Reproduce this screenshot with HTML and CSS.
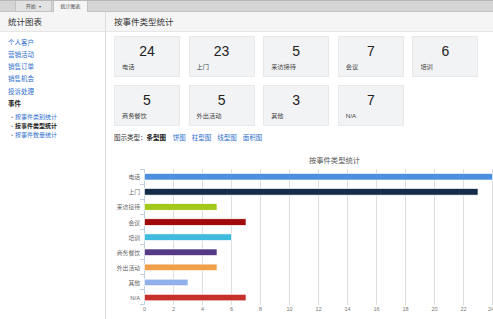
FILE: index.html
```html
<!DOCTYPE html>
<html lang="zh">
<head>
<meta charset="utf-8">
<title>按事件类型统计</title>
<link rel="stylesheet" href="styles.css">
</head>
<body>
<div class="topbar">
  <div class="tab">开始 <span class="caret">▾</span></div>
  <div class="tab active">统计图表</div>
</div>
<div class="layout">
  <aside class="sidebar">
    <div class="panel-head">统计图表</div>
    <ul class="nav">
      <li><a class="link">个人客户</a></li>
      <li><a class="link">营销活动</a></li>
      <li><a class="link">销售订单</a></li>
      <li><a class="link">销售机会</a></li>
      <li><a class="link">投诉处理</a></li>
      <li class="group">事件</li>
    </ul>
    <ul class="subnav">
      <li><span class="dot">•</span><a class="link">按事件类别统计</a></li>
      <li class="current"><span class="dot">•</span>按事件类型统计</li>
      <li><span class="dot">•</span><a class="link">按事件数量统计</a></li>
    </ul>
  </aside>
  <main class="main">
    <div class="panel-head">按事件类型统计</div>
    <div class="content">
      <div class="cards">
        <div class="card"><div class="num">24</div><div class="lbl">电话</div></div>
        <div class="card"><div class="num">23</div><div class="lbl">上门</div></div>
        <div class="card"><div class="num">5</div><div class="lbl">来访接待</div></div>
        <div class="card"><div class="num">7</div><div class="lbl">会议</div></div>
        <div class="card"><div class="num">6</div><div class="lbl">培训</div></div>
        <div class="card"><div class="num">5</div><div class="lbl">商务餐饮</div></div>
        <div class="card"><div class="num">5</div><div class="lbl">外出活动</div></div>
        <div class="card"><div class="num">3</div><div class="lbl">其他</div></div>
        <div class="card"><div class="num">7</div><div class="lbl">N/A</div></div>
      </div>
      <div class="types">
        <span class="type-label">图示类型：<b>条型图</b></span>
        <a class="link">饼图</a>
        <a class="link">柱型图</a>
        <a class="link">线型图</a>
        <a class="link">面积图</a>
      </div>
      <svg class="chart" width="380" height="178" viewBox="0 0 380 178">
        <text class="title" x="220.5" y="21" text-anchor="middle">按事件类型统计</text>
        <g class="grid">
          <line x1="59.5" y1="27" x2="59.5" y2="163"/>
          <line x1="88.5" y1="27" x2="88.5" y2="163"/>
          <line x1="117.5" y1="27" x2="117.5" y2="163"/>
          <line x1="146.5" y1="27" x2="146.5" y2="163"/>
          <line x1="175.5" y1="27" x2="175.5" y2="163"/>
          <line x1="204.5" y1="27" x2="204.5" y2="163"/>
          <line x1="233.5" y1="27" x2="233.5" y2="163"/>
          <line x1="262.5" y1="27" x2="262.5" y2="163"/>
          <line x1="291.5" y1="27" x2="291.5" y2="163"/>
          <line x1="320.5" y1="27" x2="320.5" y2="163"/>
          <line x1="349.5" y1="27" x2="349.5" y2="163"/>
          <line x1="378.5" y1="27" x2="378.5" y2="163"/>
        </g>
        <g class="axis">
          <line x1="30.5" y1="27" x2="30.5" y2="163"/>
          <line x1="26" y1="27.5" x2="30.5" y2="27.5"/>
          <line x1="26" y1="42.5" x2="30.5" y2="42.5"/>
          <line x1="26" y1="57.5" x2="30.5" y2="57.5"/>
          <line x1="26" y1="72.5" x2="30.5" y2="72.5"/>
          <line x1="26" y1="87.5" x2="30.5" y2="87.5"/>
          <line x1="26" y1="102.5" x2="30.5" y2="102.5"/>
          <line x1="26" y1="117.5" x2="30.5" y2="117.5"/>
          <line x1="26" y1="132.5" x2="30.5" y2="132.5"/>
          <line x1="26" y1="147.5" x2="30.5" y2="147.5"/>
          <line x1="26" y1="162.5" x2="30.5" y2="162.5"/>
        </g>
        <g class="bars">
          <rect x="30.5" y="31.5" width="348" height="6.5" fill="#4b8fde"/>
          <rect x="30.5" y="46.6" width="333.5" height="6.5" fill="#162c4b"/>
          <rect x="30.5" y="61.7" width="72.5" height="6.5" fill="#a2c81c"/>
          <rect x="30.5" y="76.8" width="101.5" height="6.5" fill="#a00a0a"/>
          <rect x="30.5" y="91.9" width="87" height="6.5" fill="#40bbe0"/>
          <rect x="30.5" y="107.0" width="72.5" height="6.5" fill="#563a88"/>
          <rect x="30.5" y="122.1" width="72.5" height="6.5" fill="#f0a04a"/>
          <rect x="30.5" y="137.2" width="43.5" height="6.5" fill="#8fb0ea"/>
          <rect x="30.5" y="152.3" width="101.5" height="6.5" fill="#c8302b"/>
        </g>
        <g class="ylabels" text-anchor="end">
          <text x="26" y="37">电话</text>
          <text x="26" y="52">上门</text>
          <text x="26" y="67">来访接待</text>
          <text x="26" y="82.5">会议</text>
          <text x="26" y="97.5">培训</text>
          <text x="26" y="112.5">商务餐饮</text>
          <text x="26" y="127.5">外出活动</text>
          <text x="26" y="142.5">其他</text>
          <text x="26" y="157.5">N/A</text>
        </g>
        <g class="xlabels" text-anchor="middle">
          <text x="30.5" y="168.5">0</text>
          <text x="59.5" y="168.5">2</text>
          <text x="88.5" y="168.5">4</text>
          <text x="117.5" y="168.5">6</text>
          <text x="146.5" y="168.5">8</text>
          <text x="175.5" y="168.5">10</text>
          <text x="204.5" y="168.5">12</text>
          <text x="233.5" y="168.5">14</text>
          <text x="262.5" y="168.5">16</text>
          <text x="291.5" y="168.5">18</text>
          <text x="320.5" y="168.5">20</text>
          <text x="349.5" y="168.5">22</text>
          <text x="377" y="168.5">24</text>
        </g>
      </svg>
    </div>
  </main>
</div>
</body>
</html>
```
FILE: styles.css
```css
* { box-sizing: border-box; }
html, body { margin: 0; padding: 0; }
body {
  width: 493px;
  height: 319px;
  overflow: hidden;
  background: #fff;
  font-family: "Liberation Sans", "Noto Sans CJK SC", sans-serif;
  color: #333;
}
a { text-decoration: none; cursor: pointer; }
.link { color: #2f6fcf; }

.topbar {
  height: 12px;
  background: #d5d5d5;
  border-top: 1px solid #b8b8b8;
  border-bottom: 1px solid #c4c4c4;
  display: flex;
  padding-left: 15px;
  gap: 1px;
}
.tab {
  height: 11px;
  font-size: 5px;
  line-height: 10px;
  color: #555;
  background: #e2e2e2;
  border: 1px solid #c2c2c2;
  border-top: none;
  width: 37px;
  text-align: center;
}
.tab .caret { font-size: 4px; margin-left: 2px; }
.tab.active {
  background: #f5f5f5;
  width: 35px;
  height: 12px;
  border-bottom: none;
  color: #444;
}

.layout {
  display: flex;
  height: 308px;
}
.sidebar {
  width: 106px;
  flex: none;
  border-right: 1px solid #dcdcdc;
}
.panel-head {
  height: 20px;
  background: #f5f5f5;
  border-bottom: 1px solid #e6e6e6;
  font-size: 8.5px;
  line-height: 20px;
  color: #333;
  padding-left: 8px;
}

.nav, .subnav { list-style: none; margin: 0; padding: 0; }
.nav { padding-top: 5px; padding-left: 8px; }
.nav li {
  font-size: 6.5px;
  line-height: 12.15px;
  height: 12.15px;
}
.nav .group { font-weight: bold; color: #222; }
.subnav { padding-left: 11px; padding-top: 3px; }
.subnav li {
  font-size: 6px;
  line-height: 9px;
  height: 9px;
}
.subnav .dot { color: #999; margin-right: 2px; font-size: 6px; }
.subnav .current { color: #222; font-weight: bold; }

.main { flex: 1; min-width: 0; }
.content { padding-left: 8px; }

.cards {
  display: grid;
  grid-template-columns: repeat(5, 66px);
  column-gap: 8.6px;
  row-gap: 8px;
  padding-top: 4px;
}
.card {
  height: 41px;
  background: #f2f3f5;
  border: 1px solid #e8e9eb;
  padding-top: 7px;
}
.num {
  font-size: 14px;
  line-height: 14px;
  text-align: center;
  color: #222;
}
.lbl {
  font-size: 6.2px;
  line-height: 8px;
  margin-top: 5px;
  padding-left: 7px;
  color: #444;
}

.types {
  margin-top: 8px;
  font-size: 6.5px;
  line-height: 8px;
  height: 8px;
  display: flex;
  gap: 6px;
}
.type-label { color: #333; margin-right: 0.7px; }
.type-label b { color: #222; }

.chart { display: block; }
.chart text { font-family: "Liberation Sans", "Noto Sans CJK SC", sans-serif; }
.chart .title { font-size: 7.3px; fill: #555; }
.grid line { stroke: #dedede; stroke-width: 1; }
.axis line { stroke: #c0d0e0; stroke-width: 1; }
.bars rect { stroke: #fff; stroke-width: 0.6; }
.ylabels text { font-size: 5.8px; fill: #666; }
.xlabels text { font-size: 5.5px; fill: #777; }
```
